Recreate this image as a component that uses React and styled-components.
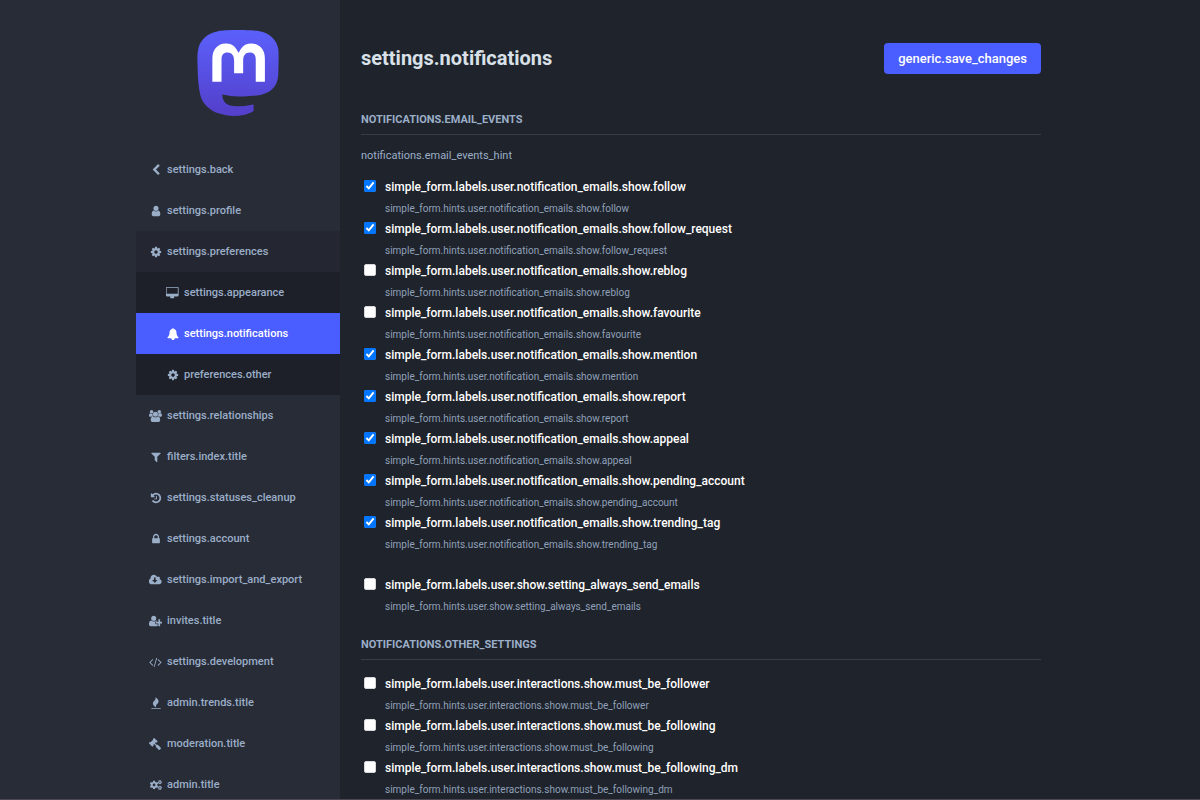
import React from "react";
import styled, { createGlobalStyle } from "styled-components";
import { FaGavel, FaCogs } from "react-icons/fa";

const icons = {
  back: {
    box: "0 0 1792 1792",
    d: "M1427 301l-531 531 531 531q19 19 19 45t-19 45l-166 166q-19 19-45 19t-45-19l-742-742q-19-19-19-45t19-45l742-742q19-19 45-19t45 19l166 166q19 19 19 45t-19 45z",
  },
  user: {
    box: "0 0 1792 1792",
    d: "M1536 1399q0 109-62.5 187t-150.5 78h-854q-88 0-150.5-78t-62.5-187q0-85 8.5-160.5t31.5-152 58.5-131 94-89 134.5-34.5q131 128 313 128t313-128q76 0 134.5 34.5t94 89 58.5 131 31.5 152 8.5 160.5zm-256-887q0 159-112.5 271.5t-271.5 112.5-271.5-112.5-112.5-271.5 112.5-271.5 271.5-112.5 271.5 112.5 112.5 271.5z",
  },
  cog: {
    box: "0 0 1792 1792",
    d: "M1152 896q0-106-75-181t-181-75-181 75-75 181 75 181 181 75 181-75 75-181zm512-109v222q0 12-8 23t-20 13l-185 28q-19 54-39 91 35 50 107 138 10 12 10 25t-9 23q-27 37-99 108t-94 71q-12 0-26-9l-138-108q-44 23-91 38-16 136-29 186-7 28-36 28h-222q-14 0-24.5-8.5t-11.5-21.5l-28-184q-49-16-90-37l-141 107q-10 9-25 9-14 0-25-11-126-114-165-168-7-10-7-23 0-12 8-23 15-21 51-66.5t54-70.5q-27-50-41-99l-183-27q-13-2-21-12.5t-8-23.5v-222q0-12 8-23t19-13l186-28q14-46 39-92-40-57-107-138-10-12-10-24 0-10 9-23 26-36 98.5-107.5t94.5-71.5q13 0 26 10l138 107q44-23 91-38 16-136 29-186 7-28 36-28h222q14 0 24.5 8.5t11.5 21.5l28 184q49 16 90 37l142-107q9-9 24-9 13 0 25 10 129 119 165 170 7 8 7 22 0 12-8 23-15 21-51 66.5t-54 70.5q26 50 41 98l183 28q13 2 21 12.5t8 23.5z",
  },
  desktop: {
    box: "-32 0 1920 1792",
    d: "M1728 992v-832q0-13-9.5-22.5t-22.5-9.5h-1600q-13 0-22.5 9.5t-9.5 22.5v832q0 13 9.5 22.5t22.5 9.5h1600q13 0 22.5-9.5t9.5-22.5zm128-832v1088q0 66-47 113t-113 47h-544q0 37 16 77.5t32 71 16 43.5q0 26-19 45t-45 19h-512q-26 0-45-19t-19-45q0-14 16-44t32-70 16-78h-544q-66 0-113-47t-47-113v-1088q0-66 47-113t113-47h1600q66 0 113 47t47 113z",
  },
  bell: {
    box: "0 0 1792 1792",
    d: "M1728 1408q0 52-38 90t-90 38h-448q0 106-75 181t-181 75-181-75-75-181h-448q-52 0-90-38t-38-90q50-42 91-88t85-119.5 74.5-158.5 50-206 19.5-260q0-152 117-282.5t307-158.5q-8-19-8-39 0-40 28-68t68-28 68 28 28 68q0 20-8 39 190 28 307 158.5t117 282.5q0 139 19.5 260t50 206 74.5 158.5 85 119.5 91 88z",
  },
  users: {
    box: "-64 0 1920 1792",
    d: "M529 896q-162 5-265 128h-134q-82 0-138-40.5t-56-118.5q0-353 124-353 6 0 43.5 21t97.5 42.5 119 21.5q67 0 133-23-5 37-5 66 0 159 93 293zm1071 637q0 120-73 189.5t-194 69.5h-874q-121 0-194-69.5t-73-189.5q0-53 3.5-103.5t14-109 26.5-108.5 43-97.5 62-81 85.5-53.5 111.5-20q10 0 43 21.5t73 48 107 48 135 21.5 135-21.5 107-48 73-48 43-21.5q61 0 111.5 20t85.5 53.5 62 81 43 97.5 26.5 108.5 14 109 3.5 103.5zm-1024-1277q0 106-75 181t-181 75-181-75-75-181 75-181 181-75 181 75 75 181zm704 384q0 159-112.5 271.5t-271.5 112.5-271.5-112.5-112.5-271.5 112.5-271.5 271.5-112.5 271.5 112.5 112.5 271.5zm576 225q0 78-56 118.5t-138 40.5h-134q-103-123-265-128 93-134 93-293 0-29-5-66 66 23 133 23 59 0 119-21.5t97.5-42.5 43.5-21q124 0 124 353zm-128-609q0 106-75 181t-181 75-181-75-75-181 75-181 181-75 181 75 75 181z",
  },
  filter: {
    box: "0 0 1792 1792",
    d: "M1595 295q17 41-14 70l-493 493v742q0 42-39 59-13 5-25 5-27 0-45-19l-256-256q-19-19-19-45v-486l-493-493q-31-29-14-70 17-39 59-39h1280q42 0 59 39z",
  },
  history: {
    box: "0 0 1792 1792",
    d: "M1664 896q0 156-61 298t-164 245-245 164-298 61q-172 0-327-72.5t-264-204.5q-7-10-6.5-22.5t8.5-20.5l137-138q10-9 25-9 16 2 23 12 73 95 179 147t225 52q104 0 198.5-40.5t163.5-109.5 109.5-163.5 40.5-198.5-40.5-198.5-109.5-163.5-163.5-109.5-198.5-40.5q-98 0-188 35.5t-160 101.5l137 138q31 30 14 69-17 40-59 40h-448q-26 0-45-19t-19-45v-448q0-42 40-59 39-17 69 14l130 129q107-101 244.5-156.5t284.5-55.5q156 0 298 61t245 164 164 245 61 298zm-640-288v448q0 14-9 23t-23 9h-320q-14 0-23-9t-9-23v-64q0-14 9-23t23-9h224v-352q0-14 9-23t23-9h64q14 0 23 9t9 23z",
  },
  lock: {
    box: "0 0 1792 1792",
    d: "M640 768h512v-192q0-106-75-181t-181-75-181 75-75 181v192zm832 96v576q0 40-28 68t-68 28h-960q-40 0-68-28t-28-68v-576q0-40 28-68t68-28h32v-192q0-184 132-316t316-132 316 132 132 316v192h32q40 0 68 28t28 68z",
  },
  cloud: {
    box: "-32 0 1920 1792",
    d: "M1216 928q0-14-9-23t-23-9h-224v-352q0-13-9.5-22.5t-22.5-9.5h-192q-13 0-22.5 9.5t-9.5 22.5v352h-224q-13 0-22.5 9.5t-9.5 22.5q0 14 9 23l352 352q9 9 23 9t23-9l351-351q10-12 10-24zm640 224q0 159-112.5 271.5t-271.5 112.5h-1088q-185 0-316.5-131.5t-131.5-316.5q0-130 70-240t188-165q-2-30-2-43 0-212 150-362t362-150q156 0 285.5 87t188.5 231q71-62 166-62 106 0 181 75t75 181q0 76-41 138 130 31 213.5 135.5t83.5 238.5z",
  },
  userPlus: {
    box: "0 0 2048 1792",
    d: "M704 896q-159 0-271.5-112.5t-112.5-271.5 112.5-271.5 271.5-112.5 271.5 112.5 112.5 271.5-112.5 271.5-271.5 112.5zm960 128h352q13 0 22.5 9.5t9.5 22.5v192q0 13-9.5 22.5t-22.5 9.5h-352v352q0 13-9.5 22.5t-22.5 9.5h-192q-13 0-22.5-9.5t-9.5-22.5v-352h-352q-13 0-22.5-9.5t-9.5-22.5v-192q0-13 9.5-22.5t22.5-9.5h352v-352q0-13 9.5-22.5t22.5-9.5h192q13 0 22.5 9.5t9.5 22.5v352zm-736 224q0 52 38 90t90 38h256v238q-68 50-171 50h-874q-121 0-194-69t-73-190q0-53 3.5-103.5t14-109 26.5-108.5 43-97.5 62-81 85.5-53.5 111.5-20q19 0 39 17 79 61 154.5 91.5t164.5 30.5 164.5-30.5 154.5-91.5q20-17 39-17 132 0 217 96h-223q-52 0-90 38t-38 90v192z",
  },
  code: {
    box: "0 0 1920 1792",
    d: "M617 1399l-50 50q-10 10-23 10t-23-10l-466-466q-10-10-10-23t10-23l466-466q10-10 23-10t23 10l50 50q10 10 10 23t-10 23l-393 393 393 393q10 10 10 23t-10 23zm591-1067l-373 1291q-4 13-15.5 19.5t-23.5 2.5l-62-17q-13-4-19.5-15.5t-2.5-24.5l373-1291q4-13 15.5-19.5t23.5-2.5l62 17q13 4 19.5 15.5t2.5 24.5zm657 651l-466 466q-10 10-23 10t-23-10l-50-50q-10-10-10-23t10-23l393-393-393-393q-10-10-10-23t10-23l50-50q10-10 23-10t23 10l466 466q10 10 10 23t-10 23z",
  },
  fire: {
    box: "0 0 1792 1792",
    d: "M1600 1696v64q0 13-9.500 22.500t-22.500 9.500h-1344q-13 0-22.500-9.500t-9.500-22.500v-64q0-13 9.500-22.500t22.500-9.500h1344q13 0 22.500 9.500t9.500 22.500zM1280 640q0 104-40.500 187t-98 140-111 110-94.500 118-41 144q0 90 50 197-220-60-365-220t-145-356q0-104 40.500-187t98-140 111-110 94.500-118 41-144q0-90-50-197 220 60 365 220t145 356z",
  },
};

function Icon({ name }) {
  return (
    <Glyph viewBox={icons[name].box} aria-hidden="true">
      <path d={icons[name].d} />
    </Glyph>
  );
}

const topLinks = [
  { icon: <Icon name="back" />, text: "settings.back" },
  { icon: <Icon name="user" />, text: "settings.profile" },
];

const subLinks = [
  { icon: <Icon name="desktop" />, text: "settings.appearance" },
  { icon: <Icon name="bell" />, text: "settings.notifications", active: true },
  { icon: <Icon name="cog" />, text: "preferences.other" },
];

const bottomLinks = [
  { icon: <Icon name="users" />, text: "settings.relationships" },
  { icon: <Icon name="filter" />, text: "filters.index.title" },
  { icon: <Icon name="history" />, text: "settings.statuses_cleanup" },
  { icon: <Icon name="lock" />, text: "settings.account" },
  { icon: <Icon name="cloud" />, text: "settings.import_and_export" },
  { icon: <Icon name="userPlus" />, text: "invites.title" },
  { icon: <Icon name="code" />, text: "settings.development" },
  { icon: <Icon name="fire" />, text: "admin.trends.title" },
  { icon: <FaGavel />, text: "moderation.title", flip: true },
  { icon: <FaCogs />, text: "admin.title" },
];

const emailEvents = [
  { name: "follow", checked: true },
  { name: "follow_request", checked: true },
  { name: "reblog", checked: false },
  { name: "favourite", checked: false },
  { name: "mention", checked: true },
  { name: "report", checked: true },
  { name: "appeal", checked: true },
  { name: "pending_account", checked: true },
  { name: "trending_tag", checked: true },
];

const interactions = [
  "must_be_follower",
  "must_be_following",
  "must_be_following_dm",
];

function NavItem({ link }) {
  return (
    <li>
      <NavLink href="#" $active={link.active}>
        <IconSlot $flip={link.flip}>{link.icon}</IconSlot>
        {link.text}
      </NavLink>
    </li>
  );
}

function CheckField({ scope, name, checked }) {
  const id = `${scope}.${name}`;
  return (
    <Field>
      <Checkbox
        type="checkbox"
        id={id}
        defaultChecked={checked}
        aria-describedby={`${id}.hint`}
      />
      <Label htmlFor={id}>{`simple_form.labels.${id}`}</Label>
      <Hint id={`${id}.hint`}>{`simple_form.hints.${id}`}</Hint>
    </Field>
  );
}

function Logo() {
  return (
    <LogoLink href="#" aria-label="Mastodon">
      <svg width="82" height="87" viewBox="4 0 71 76" aria-hidden="true">
        <defs>
          <linearGradient id="logo-fill" x1="0" y1="0" x2="0" y2="1">
            <stop offset="0" stopColor="#5b60fb" />
            <stop offset="1" stopColor="#533fca" />
          </linearGradient>
        </defs>
        <path
          fill="url(#logo-fill)"
          d="M74.700 16.600c.6 6 .1 15.700.1 17.300 0 .5-.1 4.800-.1 5.300-.7 11.500-8 16-15.600 17.500h-.3c-4.900 1-10 1.200-14.900 1.400h-3.600c-4.800 0-9.700-.6-14.400-1.700h-.2v.1c.1 1.600.4 3.100 1 4.500.6 1.700 2.900 5.700 11.400 5.700 5 0 9.900-.6 14.800-1.700h.1l.1.200v5.600l-.1.200c-1.600 1.100-3.700 1.700-5.600 2.300-.8.300-1.600.5-2.400.7-7.500 1.700-15.400 1.300-22.700-1.200-6.800-2.400-13.800-8.200-15.500-15.200-.9-3.800-1.600-7.600-1.900-11.500-.6-5.800-.6-11.700-.8-17.500C3.900 24.500 4 20 4.900 16 6.700 7.900 14.100 2.200 22.300 1c1.400-.2 4.100-1 16.500-1h.1C51.400 0 56.700.8 58.100 1c8.400 1.200 15.500 7.500 16.600 15.600Z"
        />
        <path
          fill="#fff"
          d="M63 45.300v-20c0-4.100-1-7.300-3.200-9.700-2.100-2.400-5-3.700-8.500-3.700-4.100 0-7.200 1.600-9.300 4.700l-2 3.300-2-3.300c-2-3.100-5.100-4.700-9.200-4.700-3.500 0-6.400 1.300-8.600 3.700-2.100 2.400-3.100 5.600-3.100 9.700v20h8V25.900c0-4.100 1.700-6.200 5.200-6.200 3.800 0 5.800 2.500 5.800 7.400V37.700H44V27.100c0-4.900 1.900-7.400 5.800-7.400 3.500 0 5.200 2.100 5.200 6.200V45.300h8Z"
        />
      </svg>
    </LogoLink>
  );
}

function App() {
  return (
    <Container>
      <GlobalStyle />
      <SidebarWrapper>
        <Sidebar>
          <Logo />
          <nav>
            <NavList>
              {topLinks.map((link) => (
                <NavItem key={link.text} link={link} />
              ))}
              <Selected>
                <NavLink href="#">
                  <IconSlot>
                    <Icon name="cog" />
                  </IconSlot>
                  settings.preferences
                </NavLink>
                <SubList>
                  {subLinks.map((link) => (
                    <NavItem key={link.text} link={link} />
                  ))}
                </SubList>
              </Selected>
              {bottomLinks.map((link) => (
                <NavItem key={link.text} link={link} />
              ))}
            </NavList>
          </nav>
        </Sidebar>
      </SidebarWrapper>
      <ContentWrapper>
        <Content>
          <Heading>
            <h1>settings.notifications</h1>
            <SaveButton type="submit" form="notifications">
              generic.save_changes
            </SaveButton>
          </Heading>
          <form id="notifications">
            <SectionTitle>notifications.email_events</SectionTitle>
            <Lead>notifications.email_events_hint</Lead>
            <Fields>
              {emailEvents.map((event) => (
                <CheckField
                  key={event.name}
                  scope="user.notification_emails.show"
                  name={event.name}
                  checked={event.checked}
                />
              ))}
            </Fields>
            <Fields>
              <CheckField scope="user.show" name="setting_always_send_emails" />
            </Fields>
            <SectionTitle>notifications.other_settings</SectionTitle>
            <Fields>
              {interactions.map((name) => (
                <CheckField
                  key={name}
                  scope="user.interactions.show"
                  name={name}
                />
              ))}
            </Fields>
          </form>
        </Content>
      </ContentWrapper>
    </Container>
  );
}

export default App;

const GlobalStyle = createGlobalStyle`
  * {
    box-sizing: border-box;
  }

  body {
    margin: 0;
    background: #1f232b;
    color: #fff;
    font-family: Roboto, sans-serif;
    font-size: 12px;
  }
`;

const Container = styled.div`
  display: flex;
  height: 100vh;
  overflow: hidden;
  border-bottom: 1px solid #4b4854;
`;
const SidebarWrapper = styled.aside`
  flex: 1 1 204px;
  display: flex;
  justify-content: flex-end;
  background: #282c37;
`;
const Sidebar = styled.div`
  width: 204px;
`;
const LogoLink = styled.a`
  display: block;
  padding: 30px 0 32px;

  svg {
    display: block;
    margin: 0 auto;
  }
`;
const NavList = styled.ul`
  list-style: none;
  margin: 0;
  padding: 0;
`;
const NavLink = styled.a`
  display: flex;
  align-items: center;
  gap: 4px;
  height: 41px;
  padding-left: 12px;
  font-weight: 500;
  font-size: 11px;
  text-decoration: none;
  white-space: nowrap;
  color: ${(props) => (props.$active ? "#fff" : "#9baec8")};
  background: ${(props) => (props.$active ? "#4a5dff" : "transparent")};
`;
const Selected = styled.li`
  background: #242731;
`;
const SubList = styled(NavList)`
  background: #1d2028;

  ${NavLink} {
    padding-left: 29px;
  }
`;
const IconSlot = styled.span`
  display: flex;
  justify-content: center;
  width: 15px;
  font-size: 12px;
  transform: ${(props) => (props.$flip ? "scaleX(-1)" : "none")};
`;
const Glyph = styled.svg`
  flex: none;
  height: 12px;
  fill: currentColor;
`;
const ContentWrapper = styled.main`
  flex: 1 1 724px;
`;
const Content = styled.div`
  max-width: 722px;
  padding: 43px 21px 0;
`;
const Heading = styled.div`
  display: flex;
  justify-content: space-between;
  align-items: center;
  margin-bottom: 38px;

  h1 {
    margin: 0;
    font-size: 20px;
    font-weight: 700;
    line-height: 31px;
    color: #d9e1e8;
  }
`;
const SaveButton = styled.button`
  height: 31px;
  padding: 0 14px;
  border: 0;
  border-radius: 4px;
  background: #4a5dff;
  color: #fff;
  font-family: inherit;
  font-size: 13px;
  font-weight: 500;
  cursor: pointer;
`;
const SectionTitle = styled.h2`
  margin: 0 0 14px;
  padding-bottom: 6px;
  border-bottom: 1px solid #373c48;
  font-size: 11px;
  font-weight: 700;
  line-height: 16px;
  text-transform: uppercase;
  color: #9baec8;
`;
const Lead = styled.p`
  margin: 0 0 14px;
  font-size: 11px;
  line-height: 14px;
  color: #9baec8;
`;
const Fields = styled.div`
  margin-bottom: 20px;
`;
const Field = styled.div`
  display: grid;
  grid-template-columns: 24px 1fr;
  grid-template-rows: 24px 18px;
`;
const Checkbox = styled.input`
  width: 12px;
  height: 12px;
  margin: 3px 0 0 3px;

  &:not(:checked) {
    appearance: none;
    border: 1px solid #d5d7da;
    border-radius: 2px;
    background: #fff;
  }
`;
const Label = styled.label`
  font-size: 12px;
  font-weight: 500;
  line-height: 20px;
`;
const Hint = styled.span`
  grid-column: 2;
  font-size: 10px;
  line-height: 16px;
  color: #8fa1ba;
`;
